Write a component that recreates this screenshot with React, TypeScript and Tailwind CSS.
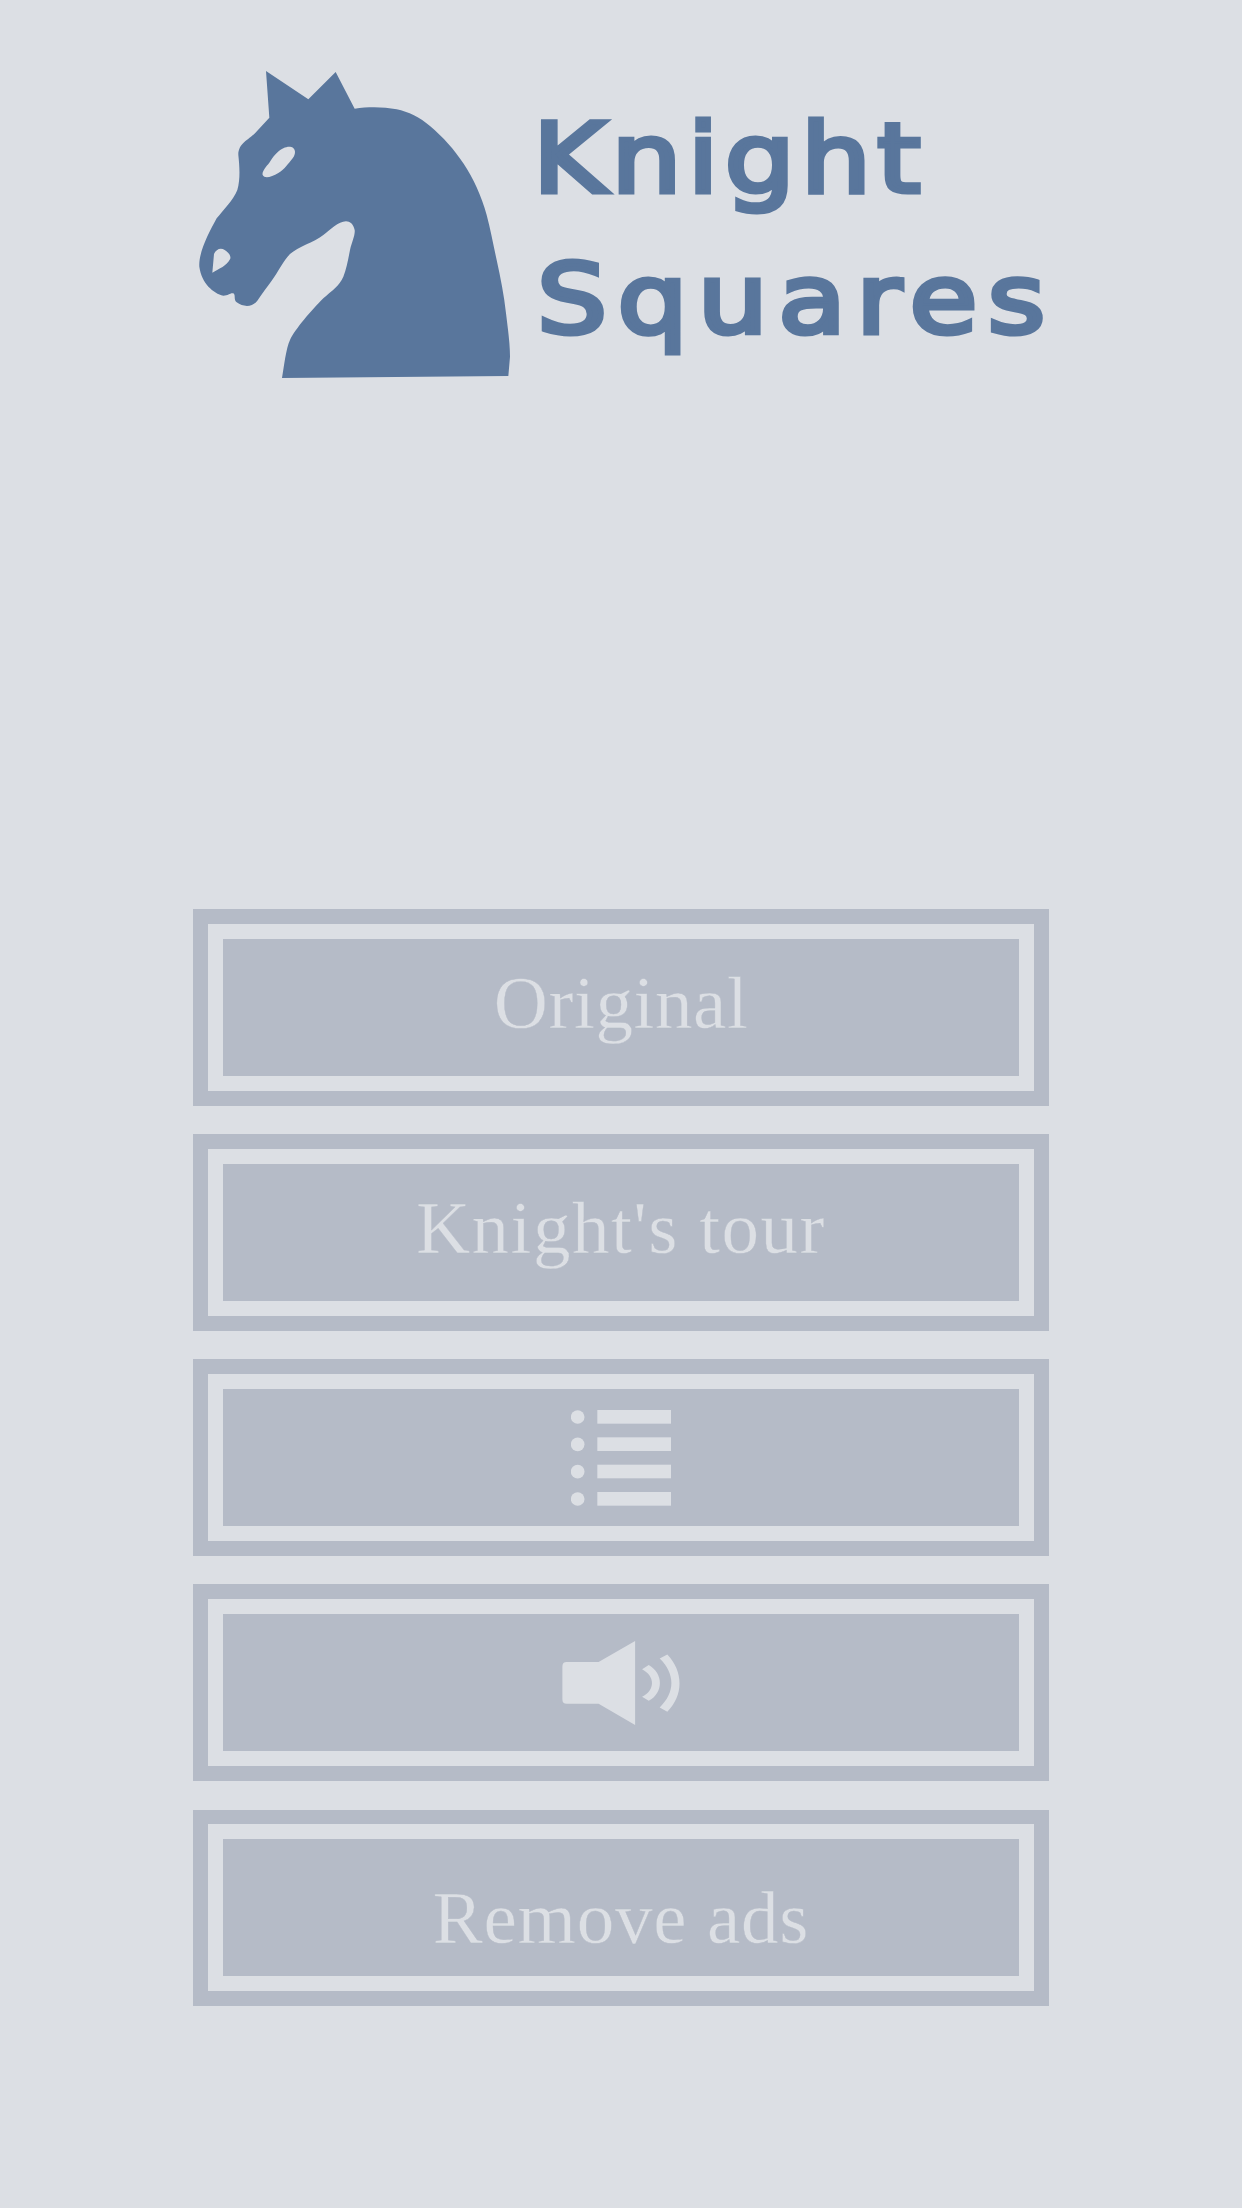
import React from 'react';

const Knight: React.FC = () => (
  <svg viewBox="0 0 1050 1020" className="w-[350px] h-[340px] shrink-0 fill-[#59769c]">
    <path
      fillRule="evenodd"
      d="M258 63 L385 148 L467 66 L524 176 C565 170 610 170 650 178 C685 185 720 203 750 228 C790 262 822 298 850 340 C880 385 905 440 920 495 C932 540 940 585 950 630 C962 685 972 735 978 790 C984 840 990 880 990 920 L985 978 L306 984 C312 950 318 895 330 870 C345 838 395 780 430 745 C455 722 478 708 490 680 C500 655 505 625 510 600 C516 575 526 555 524 540 C520 522 510 514 498 514 C475 514 450 540 430 555 C400 578 355 590 330 612 C310 632 295 665 275 692 C262 710 245 732 232 752 C218 772 190 772 170 757 C160 750 168 735 160 730 C150 728 145 737 130 737 C100 730 65 700 58 650 C55 610 85 550 110 505 C130 480 160 450 172 420 C182 385 178 345 175 315 C175 280 205 270 225 250 L268 203 Z M345 305 C342 288 325 288 310 295 C290 305 280 320 268 338 C258 350 245 365 248 375 C255 388 275 380 295 369 C315 358 325 340 338 325 C343 318 345 312 345 305 Z M97 668 L102 612 C108 598 122 592 134 600 C145 607 155 618 150 628 C140 648 118 656 97 668 Z"
    />
  </svg>
);

const ListIcon: React.FC = () => (
  <svg viewBox="213 120 300 288" className="w-[100px] h-[96px] fill-[#dcdfe4]">
    {[141, 223, 305, 387].map((y) => (
      <g key={y}>
        <circle cx="233" cy={y} r="20.5" />
        <rect x="292" y={y - 21} width="221" height="41" />
      </g>
    ))}
  </svg>
);

const SpeakerIcon: React.FC = () => (
  <svg viewBox="187 812 353 253" className="w-[118px] h-[84px] fill-[#dcdfe4]">
    <path d="M296 875 L406 812 V1065 L296 1001 H200 Q187 1001 187 988 V888 Q187 875 200 875 Z" />
    <path d="M427 897 L447 884 C492 910 492 968 447 992 L427 980 C467 960 467 918 427 897 Z" />
    <path d="M480 865 L503 853 C552 905 552 975 503 1025 L480 1012 C527 968 527 910 480 865 Z" />
  </svg>
);

const Label: React.FC<{ text: string; className: string }> = ({ text, className }) => (
  <span className={`font-['Liberation_Serif',serif] text-[75px] leading-none text-[#dcdfe4] [-webkit-text-stroke:0.4px_#b5bbc7] ${className}`}>
    {text}
  </span>
);

const MenuButton: React.FC<{ children: React.ReactNode; className?: string }> = ({
  children,
  className = 'h-[197px]',
}) => (
  <button className={`block w-full border-[15px] border-[#b5bbc7] ${className}`}>
    <div className="h-full border-[15px] border-[#dcdfe4] bg-[#b5bbc7] flex items-center justify-center">
      {children}
    </div>
  </button>
);

export default function App() {
  return (
    <div className="w-[1242px] h-[2208px] bg-[#dcdfe4] overflow-hidden">
      <div className="w-[856px] mx-auto">
        {/* Logo */}
        <div className="flex pt-[50px] -ml-[13px]">
          <Knight />
          <h1 className="ml-[6px] pt-[39px] font-['DejaVu_Sans',sans-serif] text-[96px] leading-[141px] text-[#59769c] [-webkit-text-stroke:5px_#59769c]">
            <span className="block -ml-[3px] origin-left scale-x-[1.15] tracking-[5.4px] whitespace-nowrap">Knight</span>
            <span className="block ml-px origin-left scale-x-[1.15] tracking-[9px] whitespace-nowrap">Squares</span>
          </h1>
        </div>

        {/* Menu */}
        <div className="mt-[519px] flex flex-col gap-[28px]">
          <MenuButton>
            <Label text="Original" className="pb-[11px] tracking-[0.6px]" />
          </MenuButton>
          <MenuButton>
            <Label text="Knight's tour" className="pb-[11px] tracking-[1.5px]" />
          </MenuButton>
          <MenuButton>
            <ListIcon />
          </MenuButton>
          <MenuButton>
            <SpeakerIcon />
          </MenuButton>
          <MenuButton className="mt-px h-[196px] border-t-[14px]">
            <Label text="Remove ads" className="pt-[19px] tracking-[0.8px]" />
          </MenuButton>
        </div>
      </div>
    </div>
  );
}
